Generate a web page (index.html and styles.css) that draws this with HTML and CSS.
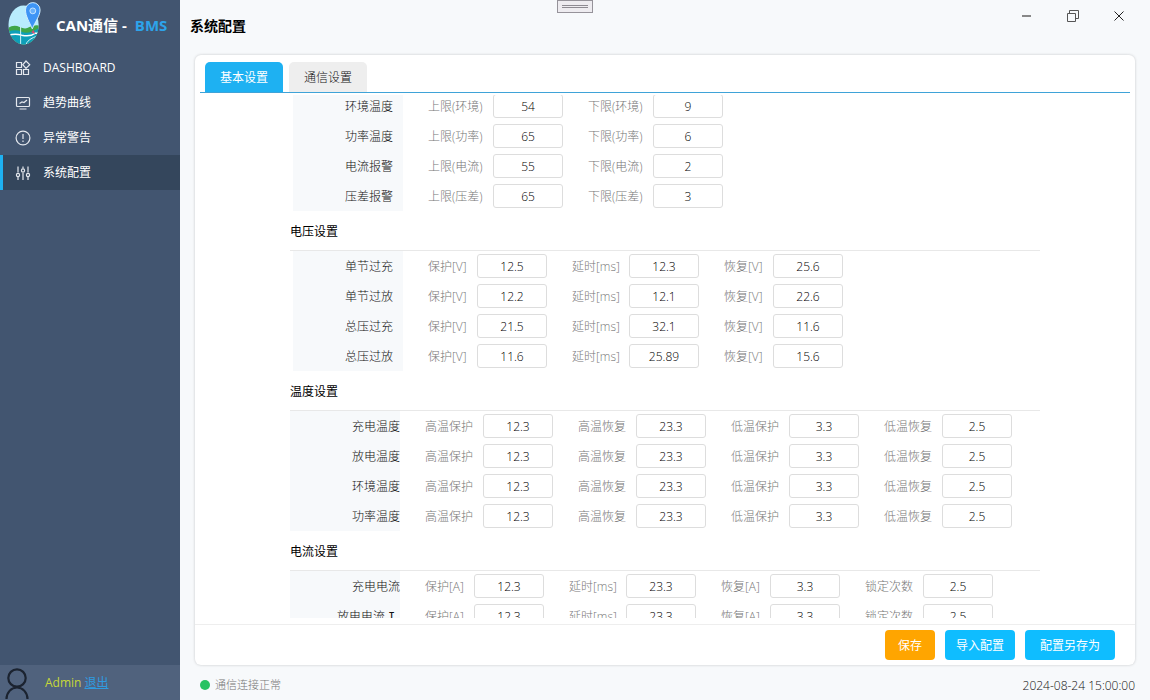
FILE: index.html
```html
<!DOCTYPE html>
<html lang="zh-CN">
<head>
<meta charset="utf-8">
<title>系统配置</title>
<link rel="stylesheet" href="styles.css">
</head>
<body>
<div class="app">
  <aside class="sidebar">
    <div class="brand">
      <svg class="logo" viewBox="0 0 36 46" aria-hidden="true">
        <clipPath id="disc"><ellipse cx="16" cy="24" rx="15.500" ry="20"/></clipPath>
        <g clip-path="url(#disc)">
          <rect width="36" height="46" fill="#b8ecfd"/>
          <path d="M0 27q6-4 12-1t10 0q6-3 12-1v20H0z" fill="#3fa648"/>
          <path d="M0 31q7-3 14 0t18-4v19H0z" fill="#0e9fb9"/>
          <path d="M0 34.500q8-2 14 0q9 2 14-2h6" fill="none" stroke="#fff" stroke-width="1.500"/>
          <path d="M13 26v20M18 46q1-8 14-11" fill="none" stroke="#d8f6fc" stroke-width="1"/>
        </g>
        <path d="M25 28C22 21 18 15 18 8.500a7.500 7.500 0 0 1 15 0c0 6-5 12-8 19.500z" fill="#3d94f5" stroke="#d4efff" stroke-width="1"/>
        <circle cx="25.500" cy="9.500" r="3" fill="#69b0fa" stroke="#c5e5ff" stroke-width="1"/>
        <path d="M24 32l2-3 2 4z" fill="#d94a70"/>
      </svg>
      <span class="brand-name">CAN通信 -</span>
      <span class="brand-accent">BMS</span>
    </div>
    <nav class="menu">
      <a class="menu-item" href="#">
        <svg class="icon" viewBox="0 0 16 16"><path d="M1.500 2.500h5v5h-5zM1.500 9.500h5v5h-5zM8.500 9.500h5v5h-5zM11 1l3.700 3.700L11 8.400 7.800 4.700z"/></svg>
        <span>DASHBOARD</span></a>
      <a class="menu-item" href="#">
        <svg class="icon" viewBox="0 0 16 16"><rect x="1.500" y="2.500" width="13" height="9" rx="1"/><path d="M4.500 14h7M4.500 8.500l2.500-1.500 2 .5 3-2.500"/></svg>
        <span>趋势曲线</span></a>
      <a class="menu-item" href="#">
        <svg class="icon" viewBox="0 0 16 16"><circle cx="8" cy="8" r="6.900"/><path d="M8 4v5M8 10.500v1.500"/></svg>
        <span>异常警告</span></a>
      <a class="menu-item active" href="#">
        <svg class="icon" viewBox="0 0 16 16"><path d="M3 1.500v6M3 12v3M8 1.500v2M8 8v7M13 1.500v6M13 12v3"/><circle cx="3" cy="10" r="1.600"/><circle cx="8" cy="5.500" r="1.600"/><circle cx="13" cy="10" r="1.600"/></svg>
        <span>系统配置</span></a>
    </nav>
    <div class="user">
      <svg class="avatar" viewBox="0 0 24 32"><circle cx="12" cy="10" r="8.700"/><path d="M1.500 31a10.500 11.500 0 0 1 21 0"/></svg>
      <span class="user-name">Admin</span>
      <a class="logout" href="#">退出</a>
    </div>
  </aside>
  <main class="main">
    <header class="titlebar">
      <h1 class="title">系统配置</h1>
      <div class="grip"></div>
      <div class="window-buttons">
        <button type="button" aria-label="最小化"><svg viewBox="0 0 12 12"><path class="faint" d="M1 6h9"/></svg></button>
        <button type="button" aria-label="还原"><svg viewBox="0 0 12 12"><path class="thin" d="M.5 3.500h8v8h-8zM2.500 3.500v-3h9v8h-3"/></svg></button>
        <button type="button" aria-label="关闭"><svg viewBox="0 0 12 12"><path d="M1.500 1.500l9 9M10.500 1.500l-9 9"/></svg></button>
      </div>
    </header>
    <section class="card">
      <div class="tabs" role="tablist">
        <button class="tab selected" type="button" role="tab" aria-selected="true">基本设置</button>
        <button class="tab" type="button" role="tab" aria-selected="false">通信设置</button>
      </div>
      <div class="viewport">
        <form class="settings">
          <section class="group inset limits">
            <div class="row"><span class="row-name">环境温度</span>
              <label class="field"><span>上限(环境)</span><input value="54"></label>
              <label class="field"><span>下限(环境)</span><input value="9"></label></div>
            <div class="row"><span class="row-name">功率温度</span>
              <label class="field"><span>上限(功率)</span><input value="65"></label>
              <label class="field"><span>下限(功率)</span><input value="6"></label></div>
            <div class="row"><span class="row-name">电流报警</span>
              <label class="field"><span>上限(电流)</span><input value="55"></label>
              <label class="field"><span>下限(电流)</span><input value="2"></label></div>
            <div class="row"><span class="row-name">压差报警</span>
              <label class="field"><span>上限(压差)</span><input value="65"></label>
              <label class="field"><span>下限(压差)</span><input value="3"></label></div>
          </section>
          <h2 class="group-title">电压设置</h2>
          <section class="group inset">
            <div class="row"><span class="row-name">单节过充</span>
              <label class="field unit"><span>保护[V]</span><input value="12.5"></label>
              <label class="field delay"><span>延时[ms]</span><input value="12.3"></label>
              <label class="field unit"><span>恢复[V]</span><input value="25.6"></label></div>
            <div class="row"><span class="row-name">单节过放</span>
              <label class="field unit"><span>保护[V]</span><input value="12.2"></label>
              <label class="field delay"><span>延时[ms]</span><input value="12.1"></label>
              <label class="field unit"><span>恢复[V]</span><input value="22.6"></label></div>
            <div class="row"><span class="row-name">总压过充</span>
              <label class="field unit"><span>保护[V]</span><input value="21.5"></label>
              <label class="field delay"><span>延时[ms]</span><input value="32.1"></label>
              <label class="field unit"><span>恢复[V]</span><input value="11.6"></label></div>
            <div class="row"><span class="row-name">总压过放</span>
              <label class="field unit"><span>保护[V]</span><input value="11.6"></label>
              <label class="field delay"><span>延时[ms]</span><input value="25.89"></label>
              <label class="field unit"><span>恢复[V]</span><input value="15.6"></label></div>
          </section>
          <h2 class="group-title">温度设置</h2>
          <section class="group">
            <div class="row"><span class="row-name">充电温度</span>
              <label class="field"><span>高温保护</span><input value="12.3"></label>
              <label class="field"><span>高温恢复</span><input value="23.3"></label>
              <label class="field"><span>低温保护</span><input value="3.3"></label>
              <label class="field"><span>低温恢复</span><input value="2.5"></label></div>
            <div class="row"><span class="row-name">放电温度</span>
              <label class="field"><span>高温保护</span><input value="12.3"></label>
              <label class="field"><span>高温恢复</span><input value="23.3"></label>
              <label class="field"><span>低温保护</span><input value="3.3"></label>
              <label class="field"><span>低温恢复</span><input value="2.5"></label></div>
            <div class="row"><span class="row-name">环境温度</span>
              <label class="field"><span>高温保护</span><input value="12.3"></label>
              <label class="field"><span>高温恢复</span><input value="23.3"></label>
              <label class="field"><span>低温保护</span><input value="3.3"></label>
              <label class="field"><span>低温恢复</span><input value="2.5"></label></div>
            <div class="row"><span class="row-name">功率温度</span>
              <label class="field"><span>高温保护</span><input value="12.3"></label>
              <label class="field"><span>高温恢复</span><input value="23.3"></label>
              <label class="field"><span>低温保护</span><input value="3.3"></label>
              <label class="field"><span>低温恢复</span><input value="2.5"></label></div>
          </section>
          <h2 class="group-title">电流设置</h2>
          <section class="group">
            <div class="row"><span class="row-name">充电电流</span>
              <label class="field unit"><span>保护[A]</span><input value="12.3"></label>
              <label class="field delay"><span>延时[ms]</span><input value="23.3"></label>
              <label class="field unit"><span>恢复[A]</span><input value="3.3"></label>
              <label class="field"><span>锁定次数</span><input value="2.5"></label></div>
            <div class="row"><span class="row-name">放电电流 <span class="numeral">I</span></span>
              <label class="field unit"><span>保护[A]</span><input value="12.3"></label>
              <label class="field delay"><span>延时[ms]</span><input value="23.3"></label>
              <label class="field unit"><span>恢复[A]</span><input value="3.3"></label>
              <label class="field"><span>锁定次数</span><input value="2.5"></label></div>
          </section>
        </form>
      </div>
      <div class="actions">
        <button class="btn save" type="button">保存</button>
        <button class="btn import" type="button">导入配置</button>
        <button class="btn export" type="button">配置另存为</button>
      </div>
    </section>
    <footer class="status">
      <span class="dot"></span>
      <span class="status-text">通信连接正常</span>
      <time class="clock">2024-08-24 15:00:00</time>
    </footer>
  </main>
</div>
</body>
</html>
```

FILE: styles.css
```css
* { box-sizing: border-box; }

body {
  margin: 0;
  font: 300 12px/16px "Open Sans", "Noto Sans CJK SC", sans-serif;
  color: #111;
  background: #f7f9fb;
}

button, input { font: inherit; }
a { text-decoration: none; }

.app { display: flex; height: 100vh; overflow: hidden; }

.sidebar {
  display: flex;
  flex-direction: column;
  flex: 0 0 180px;
  background: #425570;
  color: #fff;
}

.brand {
  display: flex;
  align-items: center;
  height: 50px;
  padding-left: 8px;
  font-size: 15px;
  font-weight: 700;
  white-space: nowrap;
}
.logo { width: 35px; height: 46px; margin: -2px 13px 0 0; }
.brand-accent { margin-left: 8px; color: #2da3ea; }

.menu-item {
  display: flex;
  align-items: center;
  gap: 12px;
  height: 35px;
  padding-left: 15px;
  color: #fff;
  font-weight: 400;
}
.menu-item.active {
  padding-left: 12px;
  border-left: 3px solid #1eb1f2;
  background: #34465c;
}
.icon { width: 16px; height: 16px; fill: none; stroke: #e4e8ee; stroke-width: 1.2; }

.user {
  display: flex;
  align-items: center;
  height: 35px;
  margin-top: auto;
  padding-left: 5px;
  background: #50627d;
  font-weight: 400;
}
.avatar { width: 24px; height: 32px; margin: 3px 16px 0 0; fill: none; stroke: #1b2330; stroke-width: 2.2; }
.user-name { color: #c8d838; }
.logout { margin-left: 3px; color: #2f9be0; text-decoration: underline; }

.main { display: flex; flex: 1; flex-direction: column; min-width: 0; }

.titlebar { display: flex; position: relative; justify-content: space-between; height: 55px; }
.title { margin: 17px 0 0 10px; font-size: 14px; line-height: 18px; font-weight: 600; color: #000; }
.grip {
  position: absolute;
  top: 0;
  left: 377px;
  width: 36px;
  height: 13px;
  border: 1px solid #96939a;
  background: linear-gradient(#8e8b92, #8e8b92) 4px 4px / 26px 1px no-repeat,
    linear-gradient(#8e8b92, #8e8b92) 4px 6px / 26px 1px no-repeat, #eeecf0;
}
.window-buttons { display: flex; height: 32px; padding-right: 8px; }
.window-buttons button { display: grid; place-items: center; width: 46px; padding: 0; border: 0; background: none; }
.window-buttons svg { width: 12px; height: 12px; fill: none; stroke: #222; }
.window-buttons .faint { stroke: #888; stroke-width: 2; }
.window-buttons .thin { stroke: #555; }

.card {
  display: flex;
  flex: 1;
  flex-direction: column;
  min-height: 0;
  margin: 0 15px;
  border-radius: 6px;
  background: #fff;
  box-shadow: 0 0 3px rgba(0, 0, 0, 0.2);
}

.tabs {
  display: flex;
  gap: 6px;
  height: 38px;
  margin: 0 5px;
  padding: 7px 5px 0;
  border-bottom: 1px solid #3fa3d8;
}
.tab { width: 78px; padding: 2px 0 0; border: 0; border-radius: 5px 5px 0 0; background: #eee; color: #111; }
.tab.selected { background: #1eb1f2; color: #fff; font-weight: 400; }

.viewport { flex: 1; min-height: 0; margin: 2px 5px 6px; overflow: hidden; }
.settings { max-width: 750px; margin: -4px auto 0; }

.group-title {
  height: 40px;
  margin: 0;
  border-bottom: 1px solid #e8e8e8;
  font-size: 12px;
  line-height: 42px;
  font-weight: 400;
  color: #000;
}
.row { display: flex; align-items: center; height: 30px; }
.row-name { width: 110px; height: 30px; background: #f7f9fb; line-height: 32px; text-align: right; white-space: nowrap; }
.inset { padding-left: 3px; }
.inset .row-name { padding-right: 10px; }
.numeral { display: inline-block; width: 12px; font-family: "Liberation Mono", monospace; text-align: left; }

.field { display: flex; align-items: center; gap: 10px; margin-left: 25px; color: #777; }
.field span { width: 48px; padding-top: 2px; white-space: nowrap; }
.unit span { width: 39px; }
.delay span { width: 47px; }
.limits .field span { width: 55px; }
.field input {
  width: 70px;
  height: 24px;
  padding: 0;
  border: 1px solid #ddd;
  border-radius: 3px;
  background: #fff;
  color: #000;
  text-align: center;
}

.actions {
  display: flex;
  justify-content: flex-end;
  gap: 10px;
  padding: 5px 20px;
  border-top: 1px solid #eee;
}
.btn { height: 30px; padding: 2px 0 0; border: 0; border-radius: 4px; background: #0fbdff; color: #fff; font-weight: 400; }
.save { width: 50px; background: #ffa500; }
.import { width: 70px; }
.export { width: 90px; }

.status { display: flex; align-items: center; height: 35px; padding: 5px 15px 0 20px; }
.dot { width: 10px; height: 10px; border-radius: 50%; background: #27c262; }
.status-text { margin-left: 5px; font-size: 11px; color: #777; }
.clock { margin-left: auto; padding-top: 2px; }
```
